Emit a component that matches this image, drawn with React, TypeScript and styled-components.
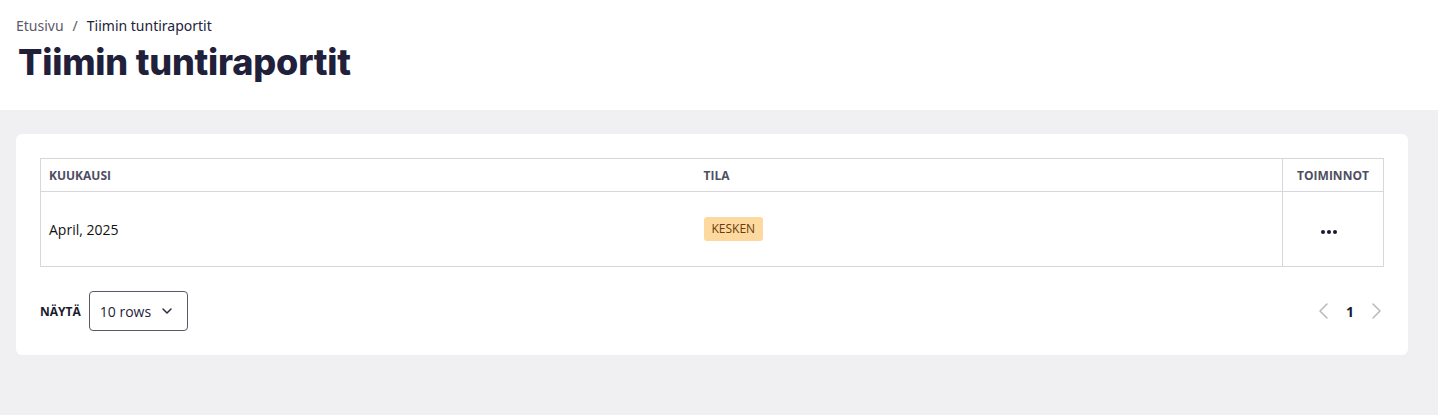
import React from 'react';
import styled, { createGlobalStyle } from 'styled-components';

const GlobalStyle = createGlobalStyle`
  body {
    margin: 0;
    background: #f0f0f2;
    font-family: "Open Sans", "Noto Sans", sans-serif;
    color: #1a1a1a;
  }
`;

function ChevronDown() {
  return (
    <svg width="16" height="16" viewBox="0 0 24 24" fill="none" stroke="#2a2a3a" strokeWidth="2.2" strokeLinecap="round" strokeLinejoin="round">
      <path d="M6 9l6 6 6-6" />
    </svg>
  );
}

function Chevron({ dir }: { dir: 'left' | 'right' }) {
  return (
    <svg width="14" height="18" viewBox="0 0 14 18" fill="none" stroke="#b8b8be" strokeWidth="1.5" strokeLinecap="round" strokeLinejoin="round">
      {dir === 'left' ? <path d="M10 2L3 9l7 7" /> : <path d="M4 2l7 7-7 7" />}
    </svg>
  );
}

function MoreDots() {
  return (
    <svg width="18" height="6" viewBox="0 0 18 6" fill="#1a1a2e">
      <circle cx="3" cy="3" r="2" />
      <circle cx="9" cy="3" r="2" />
      <circle cx="15" cy="3" r="2" />
    </svg>
  );
}

function App() {
  return (
    <>
      <GlobalStyle />
      <Header>
        <Breadcrumb>
          <Crumb>Etusivu</Crumb>
          <Sep>/</Sep>
          <Current>Tiimin tuntiraportit</Current>
        </Breadcrumb>
        <Title>Tiimin tuntiraportit</Title>
      </Header>
      <Main>
        <Card>
          <Table>
            <colgroup>
              <col style={{ width: 655 }} />
              <col />
              <col style={{ width: 101 }} />
            </colgroup>
            <thead>
              <tr>
                <Th>KUUKAUSI</Th>
                <Th>TILA</Th>
                <Th $action>TOIMINNOT</Th>
              </tr>
            </thead>
            <tbody>
              <tr>
                <Td>April, 2025</Td>
                <Td>
                  <Badge>KESKEN</Badge>
                </Td>
                <Td $action>
                  <DotsButton>
                    <MoreDots />
                  </DotsButton>
                </Td>
              </tr>
            </tbody>
          </Table>
          <Footer>
            <RowsControl>
              <ShowLabel>NÄYTÄ</ShowLabel>
              <Select>
                <span>10 rows</span>
                <ChevronDown />
              </Select>
            </RowsControl>
            <Pager>
              <PageArrow>
                <Chevron dir="left" />
              </PageArrow>
              <PageNumber>1</PageNumber>
              <PageArrow>
                <Chevron dir="right" />
              </PageArrow>
            </Pager>
          </Footer>
        </Card>
      </Main>
    </>
  );
}

export default App;

const Header = styled.header`
  background: #ffffff;
  padding: 17px 16px 0;
  height: 110px;
  box-sizing: border-box;
`;

const Breadcrumb = styled.nav`
  display: flex;
  align-items: center;
  gap: 9px;
  font-family: "Noto Sans", sans-serif;
  font-size: 14px;
  line-height: 18px;
`;
const Crumb = styled.span`
  color: #5a5a6a;
`;
const Sep = styled.span`
  color: #5a5a6a;
`;
const Current = styled.span`
  color: #23233a;
`;

const Title = styled.h1`
  margin: 5px 0 0 2px;
  font-family: Inter, sans-serif;
  font-size: 36px;
  font-weight: 800;
  letter-spacing: -0.2px;
  color: #20203a;
  line-height: 44px;
`;

const Main = styled.main`
  padding: 24px 30px 60px 16px;
`;

const Card = styled.section`
  background: #ffffff;
  border-radius: 6px;
  padding: 24px 24px 24px;
`;

const Table = styled.table`
  width: 100%;
  table-layout: fixed;
  border-collapse: collapse;
  border: 1px solid #d6d6dc;
`;

const Th = styled.th<{ $action?: boolean }>`
  text-align: ${(p) => (p.$action ? 'center' : 'left')};
  padding: 0 8px;
  height: 32px;
  font-size: 12px;
  font-weight: 700;
  color: #4e4e60;
  border-bottom: 1px solid #d6d6dc;
  border-left: ${(p) => (p.$action ? '1px solid #d6d6dc' : 'none')};
`;

const Td = styled.td<{ $action?: boolean }>`
  text-align: ${(p) => (p.$action ? 'center' : 'left')};
  padding: 0 8px;
  height: 74px;
  font-size: 14px;
  color: #111;
  border-left: ${(p) => (p.$action ? '1px solid #d6d6dc' : 'none')};
`;

const Badge = styled.span`
  display: inline-block;
  background: #fdd9a0;
  color: #6a3a0a;
  font-size: 12px;
  line-height: 16px;
  padding: 4px 8px;
  border-radius: 3px;
`;

const DotsButton = styled.span`
  display: inline-flex;
  align-items: center;
  justify-content: center;
  padding-right: 8px;
  padding-top: 2px;
`;

const Footer = styled.div`
  display: flex;
  justify-content: space-between;
  align-items: center;
  margin-top: 24px;
`;

const RowsControl = styled.div`
  display: flex;
  align-items: center;
  gap: 8px;
`;

const ShowLabel = styled.span`
  font-size: 12px;
  font-weight: 700;
  color: #1a1a2e;
`;

const Select = styled.div`
  display: flex;
  align-items: center;
  justify-content: space-between;
  width: 99px;
  height: 40px;
  box-sizing: border-box;
  padding: 0 12px 0 10px;
  border: 1px solid #5a5a66;
  border-radius: 4px;
  font-size: 14px;
  color: #23233a;
`;

const Pager = styled.div`
  display: flex;
  align-items: center;
  gap: 10px;
`;

const PageArrow = styled.span`
  display: flex;
  align-items: center;
  width: 16px;
  justify-content: center;
`;

const PageNumber = styled.span`
  font-size: 14px;
  font-weight: 700;
  color: #1a1a2e;
  min-width: 16px;
  text-align: center;
`;
